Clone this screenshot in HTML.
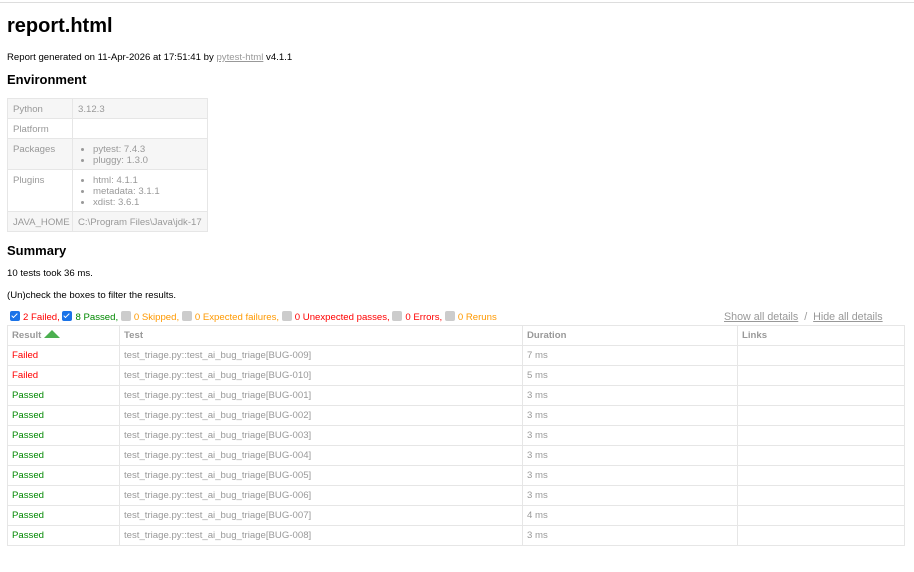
<!DOCTYPE html>
<html><head><style>
body{margin:0;width:914px;height:572px;background:#fff;font-family:"Liberation Sans",Arial,sans-serif;font-size:9.6px;color:#000;position:relative;overflow:hidden}
.a{position:absolute;white-space:nowrap}
.topline{position:absolute;left:0;top:2px;width:914px;height:1px;background:#ddd}
h1{position:absolute;left:7px;top:15px;margin:0;font-size:20px;font-weight:bold}
h2{position:absolute;margin:0;font-size:13px;font-weight:bold;left:7px}
table{border-collapse:collapse;position:absolute}
td,th{border:1px solid #e6e6e6;padding:0 0 0 5px;text-align:left;vertical-align:top;color:#999;font-size:9.6px;font-weight:normal}
.env td{padding-top:5px}
.env tr.g td{background:#f6f6f6}
.env ul{margin:0;padding-left:15px}
.env li{line-height:11px}
.res td,.res th{height:19px;vertical-align:middle;padding:0 0 0 4px}
.res th{font-weight:bold;color:#999}
.f{color:#f00!important}.p{color:#080!important}
.cb{display:inline-block;width:10px;height:10px;border-radius:2px;vertical-align:-1px;margin-right:3px}
.on{background:#1a73e8;position:relative}
.on:after{content:"";position:absolute;left:3px;top:1px;width:2px;height:5px;border:solid #fff;border-width:0 1.5px 1.5px 0;transform:rotate(45deg)}
.off{background:#ccc}
</style></head><body>
<div class="topline"></div>
<h1>report.html</h1>
<div class="a" style="left:7px;top:52px">Report generated on 11-Apr-2026 at 17:51:41 by <span style="color:#999;text-decoration:underline">pytest-html</span> v4.1.1</div>
<h2 style="top:72px">Environment</h2>
<table class="env" style="left:7px;top:98px;width:201px">
<col style="width:65px"><col>
<tr class="g" style="height:20px"><td>Python</td><td>3.12.3</td></tr>
<tr style="height:20px"><td>Platform</td><td></td></tr>
<tr class="g" style="height:31px"><td>Packages</td><td><ul><li>pytest: 7.4.3</li><li>pluggy: 1.3.0</li></ul></td></tr>
<tr style="height:42px"><td>Plugins</td><td><ul><li>html: 4.1.1</li><li>metadata: 3.1.1</li><li>xdist: 3.6.1</li></ul></td></tr>
<tr class="g" style="height:20px"><td>JAVA_HOME</td><td>C:\Program Files\Java\jdk-17</td></tr>
</table>
<h2 style="top:243px">Summary</h2>
<div class="a" style="left:7px;top:268px">10 tests took 36 ms.</div>
<div class="a" style="left:7px;top:290px">(Un)check the boxes to filter the results.</div>
<div class="a" style="left:10px;top:311px"><span class="cb on"></span><span style="color:#f00">2 Failed,</span> <span class="cb on"></span><span style="color:#080">8 Passed,</span> <span class="cb off"></span><span style="color:#f90">0 Skipped,</span> <span class="cb off"></span><span style="color:#f90">0 Expected failures,</span> <span class="cb off"></span><span style="color:#f00">0 Unexpected passes,</span> <span class="cb off"></span><span style="color:#f00">0 Errors,</span> <span class="cb off"></span><span style="color:#f90">0 Reruns</span></div>
<div class="a" style="left:724px;top:311px;font-size:10.7px;color:#999"><span style="text-decoration:underline">Show all details</span> &nbsp;/&nbsp; <span style="text-decoration:underline">Hide all details</span></div>
<table class="res" style="left:7px;top:325px;width:898px">
<col style="width:112px"><col style="width:403px"><col style="width:215px"><col>
<tr><th>Result <svg width="16" height="8" style="vertical-align:0"><path d="M0 8 L8 0 L16 8Z" fill="#4caf50"/></svg></th><th>Test</th><th>Duration</th><th>Links</th></tr>
<tr><td class="f">Failed</td><td>test_triage.py::test_ai_bug_triage[BUG-009]</td><td>7 ms</td><td></td></tr>
<tr><td class="f">Failed</td><td>test_triage.py::test_ai_bug_triage[BUG-010]</td><td>5 ms</td><td></td></tr>
<tr><td class="p">Passed</td><td>test_triage.py::test_ai_bug_triage[BUG-001]</td><td>3 ms</td><td></td></tr>
<tr><td class="p">Passed</td><td>test_triage.py::test_ai_bug_triage[BUG-002]</td><td>3 ms</td><td></td></tr>
<tr><td class="p">Passed</td><td>test_triage.py::test_ai_bug_triage[BUG-003]</td><td>3 ms</td><td></td></tr>
<tr><td class="p">Passed</td><td>test_triage.py::test_ai_bug_triage[BUG-004]</td><td>3 ms</td><td></td></tr>
<tr><td class="p">Passed</td><td>test_triage.py::test_ai_bug_triage[BUG-005]</td><td>3 ms</td><td></td></tr>
<tr><td class="p">Passed</td><td>test_triage.py::test_ai_bug_triage[BUG-006]</td><td>3 ms</td><td></td></tr>
<tr><td class="p">Passed</td><td>test_triage.py::test_ai_bug_triage[BUG-007]</td><td>4 ms</td><td></td></tr>
<tr><td class="p">Passed</td><td>test_triage.py::test_ai_bug_triage[BUG-008]</td><td>3 ms</td><td></td></tr>
</table>
</body></html>
